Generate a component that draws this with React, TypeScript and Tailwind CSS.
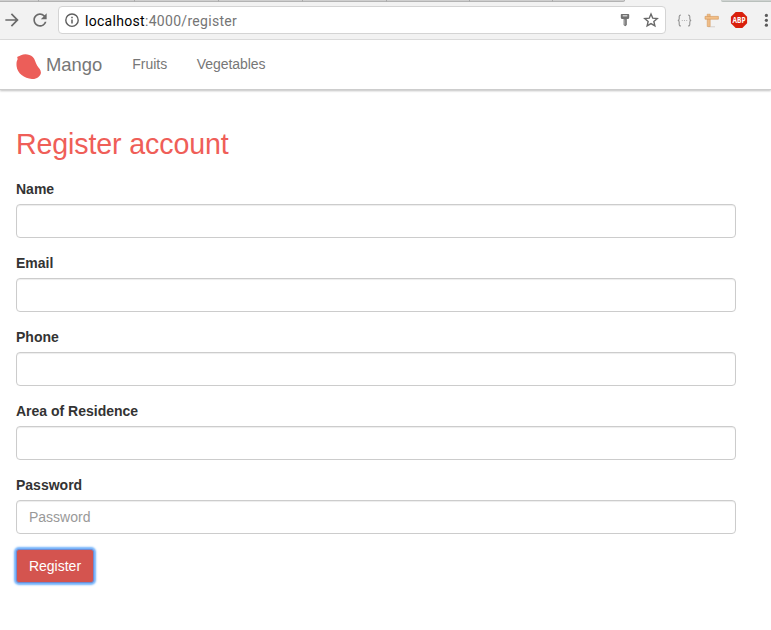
import React from "react";

const tabWidths = ["w-[39px]", "w-[96px]", "w-[84px]", "w-[84px]", "w-[84px]", "w-[83px]", "w-[83px]", "w-[72px]"];

const fields = [
  { label: "Name", type: "text", placeholder: "" },
  { label: "Email", type: "email", placeholder: "" },
  { label: "Phone", type: "tel", placeholder: "" },
  { label: "Area of Residence", type: "text", placeholder: "" },
  { label: "Password", type: "password", placeholder: "Password" },
];

function BrowserBar() {
  return (
    <header className="flex h-10 flex-col border-b border-[#dedede] bg-[#f2f2f2]">
      <div className="flex h-[2px] justify-between">
        <div className="flex">
          {tabWidths.map((w, i) => (
            <div key={i} className={`${w} h-[2px] border-r border-b border-r-[#a9a9a9] border-b-[#b3b3b3] bg-[#cfcfcf] last:rounded-br-[2px]`} />
          ))}
        </div>
        <div className="h-[2px] w-[50px] rounded-bl-[2px] border-b border-[#b9c0bc] bg-[#cfd3d1]" />
      </div>
      <div className="flex pt-[4px]">
        <svg className="mt-1 ml-[2px] size-5 shrink-0" viewBox="0 0 24 24" fill="#6a6a6a">
          <path d="M12 4l-1.41 1.41L16.17 11H4v2h12.17l-5.58 5.59L12 20l8-8z" />
        </svg>
        <svg className="mt-1 ml-[8px] size-5 shrink-0" viewBox="0 0 24 24" fill="#6a6a6a">
          <path d="M17.65 6.35A7.96 7.96 0 0 0 12 4c-4.42 0-7.99 3.58-7.99 8s3.57 8 7.99 8c3.73 0 6.84-2.55 7.73-6h-2.08A5.99 5.99 0 0 1 12 18c-3.31 0-6-2.69-6-6s2.69-6 6-6c1.66 0 3.14.69 4.22 1.78L13 11h7V4l-2.35 2.35z" />
        </svg>
        <div className="ml-[8px] flex h-7 w-[608px] shrink-0 items-center rounded-[4px] border border-[#d4d4d4] bg-white">
          <svg className="ml-[5px] size-4" viewBox="0 0 16 16" fill="none" stroke="#5e5e5e">
            <circle cx="8" cy="8.2" r="6.2" strokeWidth="1.4" />
            <path d="M8 7.4v4M8 4.8v1.4" strokeWidth="1.5" />
          </svg>
          <span className="mt-px ml-[5px] font-[Roboto,sans-serif] text-[14px] leading-5 tracking-[0.3px] text-[#757575]">
            <span className="text-black">localhost</span>:4000/register
          </span>
          <svg className="ml-auto h-[14px] w-[10px]" viewBox="0 0 10 14">
            <path d="M1.6 1h6.8q.8 0 .8.8v2.7q0 1.5-1.5 1.5H6.8v6L5.3 13.3 3.6 12V6H2.3Q.8 6 .8 4.5V1.8q0-.8.8-.8z" fill="#707070" />
            <path d="M2.7 2.2h4.6v1.2H2.7z" fill="#dedede" />
            <path d="M4.8 6.4v5.4" stroke="#c4c4c4" strokeWidth=".8" />
          </svg>
          <svg className="mr-[6px] ml-[13px] size-4" viewBox="0 0 16 16" fill="none" stroke="#686868" strokeWidth="1.4">
            <path d="M8 2l1.75 4.15 4.5.4-3.4 2.95 1 4.4L8 11.55 4.15 13.9l1-4.4-3.4-2.95 4.5-.4z" />
          </svg>
        </div>
        <svg className="mt-[8px] ml-[10.5px] h-[13px] w-[15px] shrink-0" viewBox="0 0 15 14" preserveAspectRatio="none" fill="none" stroke="#929292" strokeWidth="1.1">
          <path d="M4 1Q2.2 1 2.2 2.8v2.4Q2.2 7 .8 7q1.4 0 1.4 1.8v2.4Q2.2 13 4 13M11 1q1.8 0 1.8 1.8v2.4q0 1.8 1.4 1.8-1.4 0-1.4 1.8v2.4Q12.8 13 11 13" />
          <path d="M4.8 7h1M7 7h1M9.2 7h1" stroke="#b5b5b5" />
        </svg>
        <svg className="mt-[7px] ml-[12.5px] h-[15px] w-[16px] shrink-0" viewBox="0 0 16 15">
          <path d="M4 13.8h7" stroke="#d4d1cd" />
          <path d="M3.2 1.2h3v12.3h-3z" fill="#efbd88" stroke="#d19355" strokeWidth=".5" />
          <path d="M1 3.4h13.4v2.8H1z" fill="#f2bf87" stroke="#d19355" strokeWidth=".6" />
        </svg>
        <svg className="mt-[5px] ml-[10px] h-[18px] w-[18px] shrink-0" viewBox="0 0 18 18">
          <path d="M5.7.9h6.6l4.8 4.8v6.6l-4.8 4.8H5.7L.9 12.3V5.7z" fill="#d9200c" />
          <g transform="translate(9 12.1) scale(.76 1)">
            <text x="0" y="0" textAnchor="middle" fontFamily="Open Sans, sans-serif" fontSize="8.6" fontWeight="700" fill="white">ABP</text>
          </g>
        </svg>
        <svg className="mt-[6px] ml-[16px] h-4 w-[5px] shrink-0" viewBox="0 0 5 16" fill="#5b5b5b">
          <circle cx="2.4" cy="3.4" r="1.6" />
          <circle cx="2.4" cy="8.3" r="1.6" />
          <circle cx="2.4" cy="13.2" r="1.6" />
        </svg>
      </div>
    </header>
  );
}

function Navbar() {
  return (
    <nav className="flex h-[50px] items-start border-b border-[#cdcdcd] pl-4 text-[#777] shadow-[0_1px_2px_rgba(0,0,0,0.25)]">
      <a className="flex">
        <svg className="mt-[14px] h-[26px] w-[26px]" viewBox="0 0 26 26">
          <path d="M1.3 2.9C2 1.9 3.6 2.3 5 1.2 8.5-.3 13.8.1 16.8 3.1c2.2 2.2 2.6 5.5 4.3 8.4 1.5 2.6 4.1 4.3 3.8 7.4-.5 3.5-4.3 6.3-8.9 6C8.3 24.6 1.2 18.9.6 12.2.3 9.2.6 7.3 1.6 5.2 1.8 4.4.9 3.8 1.3 2.9z" fill="#ec5e59" />
        </svg>
        <span className="mt-[13px] ml-[4px] text-[18.4px] leading-6">Mango</span>
      </a>
      <a className="mt-[14px] ml-[30px] text-[14px] leading-5">Fruits</a>
      <a className="mt-[14px] ml-[29.5px] text-[14px] leading-5 tracking-[-0.05px]">Vegetables</a>
    </nav>
  );
}

export default function App() {
  return (
    <div className="h-[630px] w-[771px] overflow-hidden bg-white font-['Liberation_Sans',Arial,sans-serif] text-[#333]">
      <BrowserBar />
      <Navbar />
      <main className="px-4 pt-[38px]">
        <h1 className="text-[28.6px] leading-8 tracking-[-0.12px] text-[#ef5e58]">Register account</h1>
        <form className="mt-[19px] w-[720px]">
          {fields.map((f) => (
            <div key={f.label} className="mb-[15px]">
              <label className="mb-[5px] block text-[14px] leading-5 font-bold">{f.label}</label>
              <input
                type={f.type}
                placeholder={f.placeholder}
                className="block h-[34px] w-full rounded-[4px] border border-[#ccc] px-3 text-[14px] shadow-[inset_0_1px_1px_rgba(0,0,0,0.075)] placeholder:text-[#999]"
              />
            </div>
          ))}
          <button
            type="button"
            className="h-[34px] w-[78px] rounded-[3px] border border-[#718bd0] bg-[#d4544f] text-[14px] text-white shadow-[0_0_2px_2px_#72b2fb]"
          >
            Register
          </button>
        </form>
      </main>
    </div>
  );
}
